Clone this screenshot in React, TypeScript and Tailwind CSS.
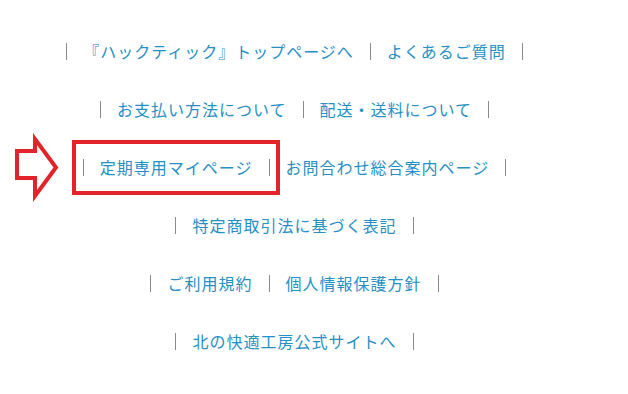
import React from 'react';

const rows: string[][] = [
  ['『ハックティック』トップページへ', 'よくあるご質問'],
  ['お支払い方法について', '配送・送料について'],
  ['定期専用マイページ', 'お問合わせ総合案内ページ'],
  ['特定商取引法に基づく表記'],
  ['ご利用規約', '個人情報保護方針'],
  ['北の快適工房公式サイトへ'],
];

const Sep = () => <span className="inline-block w-px h-[17px] bg-[#8a8a8a]" />;

export default function App() {
  return (
    <div
      className="relative w-[628px] h-[394px] bg-white overflow-hidden"
      style={{ fontFamily: '"Noto Sans CJK JP", "Noto Sans", sans-serif' }}
    >
      <ul className="w-[589px] pt-[22px] flex flex-col items-center">
        {rows.map((row, i) => (
          <li key={i} className="h-[58px] flex items-center gap-[16px]">
            {row.map((label) => (
              <React.Fragment key={label}>
                <Sep />
                <a className="text-[16px] tracking-[1px] leading-none text-[#2690c4]">{label}</a>
              </React.Fragment>
            ))}
            <Sep />
          </li>
        ))}
      </ul>

      {/* highlight box */}
      <div className="absolute left-[72px] top-[140px] w-[208px] h-[55px] border-4 border-[#e3232a]" />

      {/* arrow */}
      <svg className="absolute left-0 top-0" width="80" height="220" viewBox="0 0 80 220">
        <path
          d="M17 151 H35 V139 L56 167.5 L35 196 V178 H17 Z"
          fill="none"
          stroke="#e3232a"
          strokeWidth="4"
          strokeLinejoin="miter"
        />
      </svg>
    </div>
  );
}
